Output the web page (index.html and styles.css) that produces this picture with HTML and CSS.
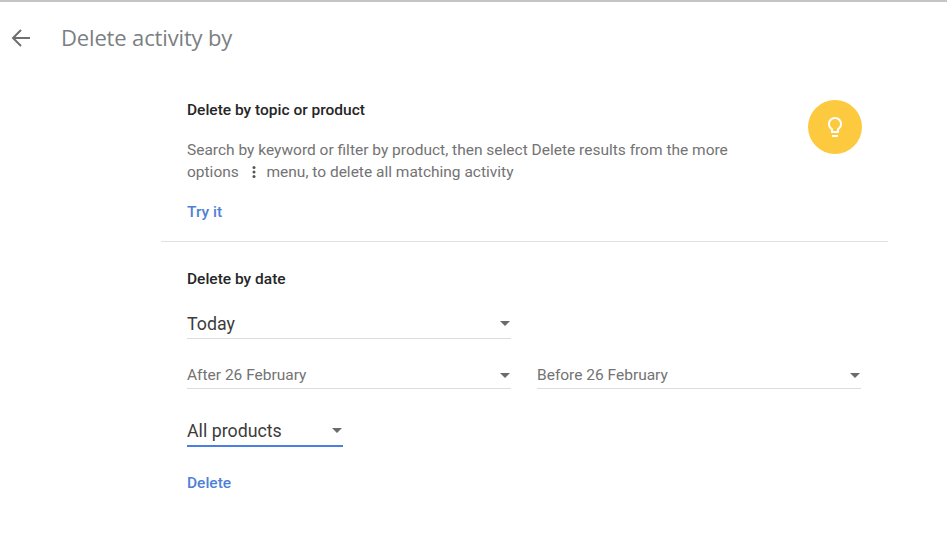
FILE: index.html
```html
<!DOCTYPE html>
<html lang="en">
<head>
<meta charset="utf-8">
<title>Delete activity by</title>
<link rel="stylesheet" href="styles.css">
</head>
<body>
<header class="topbar">
  <svg class="back" width="26" height="26" viewBox="0 0 26 26"><path d="M22 13H5.500M13 5l-8 8 8 8" fill="none" stroke="#6f6f6f" stroke-width="2"/></svg>
  <h1 class="title">Delete activity by</h1>
</header>
<main class="content">
  <section class="topic">
    <div class="topic-row">
      <div class="topic-text">
        <h2 class="heading">Delete by topic or product</h2>
        <p class="desc"><span class="line">Search by keyword or filter by product, then select Delete results from the more</span> <span class="line">options <svg class="dots" width="4" height="14" viewBox="0 0 4 14"><circle cx="2" cy="2.500" r="1.500"/><circle cx="2" cy="7" r="1.500"/><circle cx="2" cy="11.500" r="1.500"/></svg> menu, to delete all matching activity</span></p>
      </div>
      <div class="bulb">
        <svg width="24" height="24" viewBox="0 0 24 24"><path d="M9 21c0 .6.4 1 1 1h4c.6 0 1-.4 1-1v-1H9v1zm3-19C8.100 2 5 5.100 5 9c0 2.400 1.200 4.500 3 5.700V17c0 .6.400 1 1 1h6c.6 0 1-.4 1-1v-2.300c1.800-1.300 3-3.400 3-5.700 0-3.900-3.100-7-7-7zm2.900 11.100-.9.600V16h-4v-2.300l-.9-.6C7.800 12.200 7 10.700 7 9c0-2.800 2.200-5 5-5s5 2.200 5 5c0 1.700-.8 3.200-2.100 4.100z" fill="#fff"/></svg>
      </div>
    </div>
    <a class="action try">Try it</a>
  </section>
  <hr class="divider">
  <section class="date">
    <h2 class="heading">Delete by date</h2>
    <div class="select select-main"><span>Today</span><i class="caret"></i></div>
    <div class="range">
      <div class="select select-sub"><span>After 26 February</span><i class="caret"></i></div>
      <div class="select select-sub"><span>Before 26 February</span><i class="caret"></i></div>
    </div>
    <div class="select select-products"><span>All products</span><i class="caret"></i></div>
    <a class="action delete">Delete</a>
  </section>
</main>
</body>
</html>
```
FILE: styles.css
```css
html, body { margin: 0; padding: 0; }
body {
  width: 947px;
  height: 533px;
  overflow: hidden;
  background: #fff;
  font-family: Roboto, "Liberation Sans", sans-serif;
  border-top: 2px solid #c4c4c4;
  box-sizing: border-box;
}
.topbar {
  display: flex;
  align-items: center;
  height: 72px;
  padding-left: 8px;
}
.back { display: block; }
.title {
  margin: 0 0 0 27px;
  padding-bottom: 2px;
  font: 400 22px/28px "Open Sans", Roboto, sans-serif;
  letter-spacing: -0.15px;
  color: #7b7f83;
}
.content {
  margin-left: 161px;
  width: 727px;
  padding-top: 26px;
}
.topic, .date { padding: 0 26px 0 26px; }
.topic-row { display: flex; justify-content: space-between; }
.topic-text { width: 548px; }
.heading {
  margin: 0;
  font-size: 15.5px;
  line-height: 20px;
  font-weight: 500;
  color: #262626;
}
.desc {
  margin: 19px 0 0;
  font-size: 15.5px;
  line-height: 22px;
  color: #737373;
}
.line { display: block; }
.dots { margin: 0 7px 0 9px; fill: #555; vertical-align: -2px; }
.bulb {
  width: 54px;
  height: 54px;
  border-radius: 50%;
  background: #fdc93f;
  display: flex;
  align-items: center;
  justify-content: center;
}
.action {
  display: block;
  font-size: 15.5px;
  line-height: 20px;
  font-weight: 500;
  color: #4f7fd8;
}
.try { margin-top: 19px; }
.divider {
  margin: 19px 0 0;
  border: 0;
  border-top: 1px solid #e0e0e0;
}
.date { padding-top: 27px; }
.select {
  display: flex;
  align-items: center;
  justify-content: space-between;
  box-sizing: border-box;
  border-bottom: 1px solid #dcdcdc;
}
.caret {
  width: 0;
  height: 0;
  border-left: 5.500px solid transparent;
  border-right: 5.500px solid transparent;
  border-top: 5.500px solid #6b6b6b;
  margin-right: 1px;
}
.select-main {
  margin-top: 16px;
  width: 324px;
  height: 34px;
  padding-top: 4px;
  font-size: 17.8px;
  color: #3c3c3c;
}
.range {
  display: flex;
  gap: 26px;
  margin-top: 22px;
}
.select-sub {
  width: 324px;
  height: 28px;
  padding-top: 1px;
  font-size: 15.5px;
  color: #737373;
}
.select-products {
  margin-top: 24px;
  width: 156px;
  height: 34px;
  padding-top: 2px;
  font-size: 17.8px;
  color: #3c3c3c;
  border-bottom: 2px solid #4a7fe0;
}
.delete { margin-top: 26px; }
```
